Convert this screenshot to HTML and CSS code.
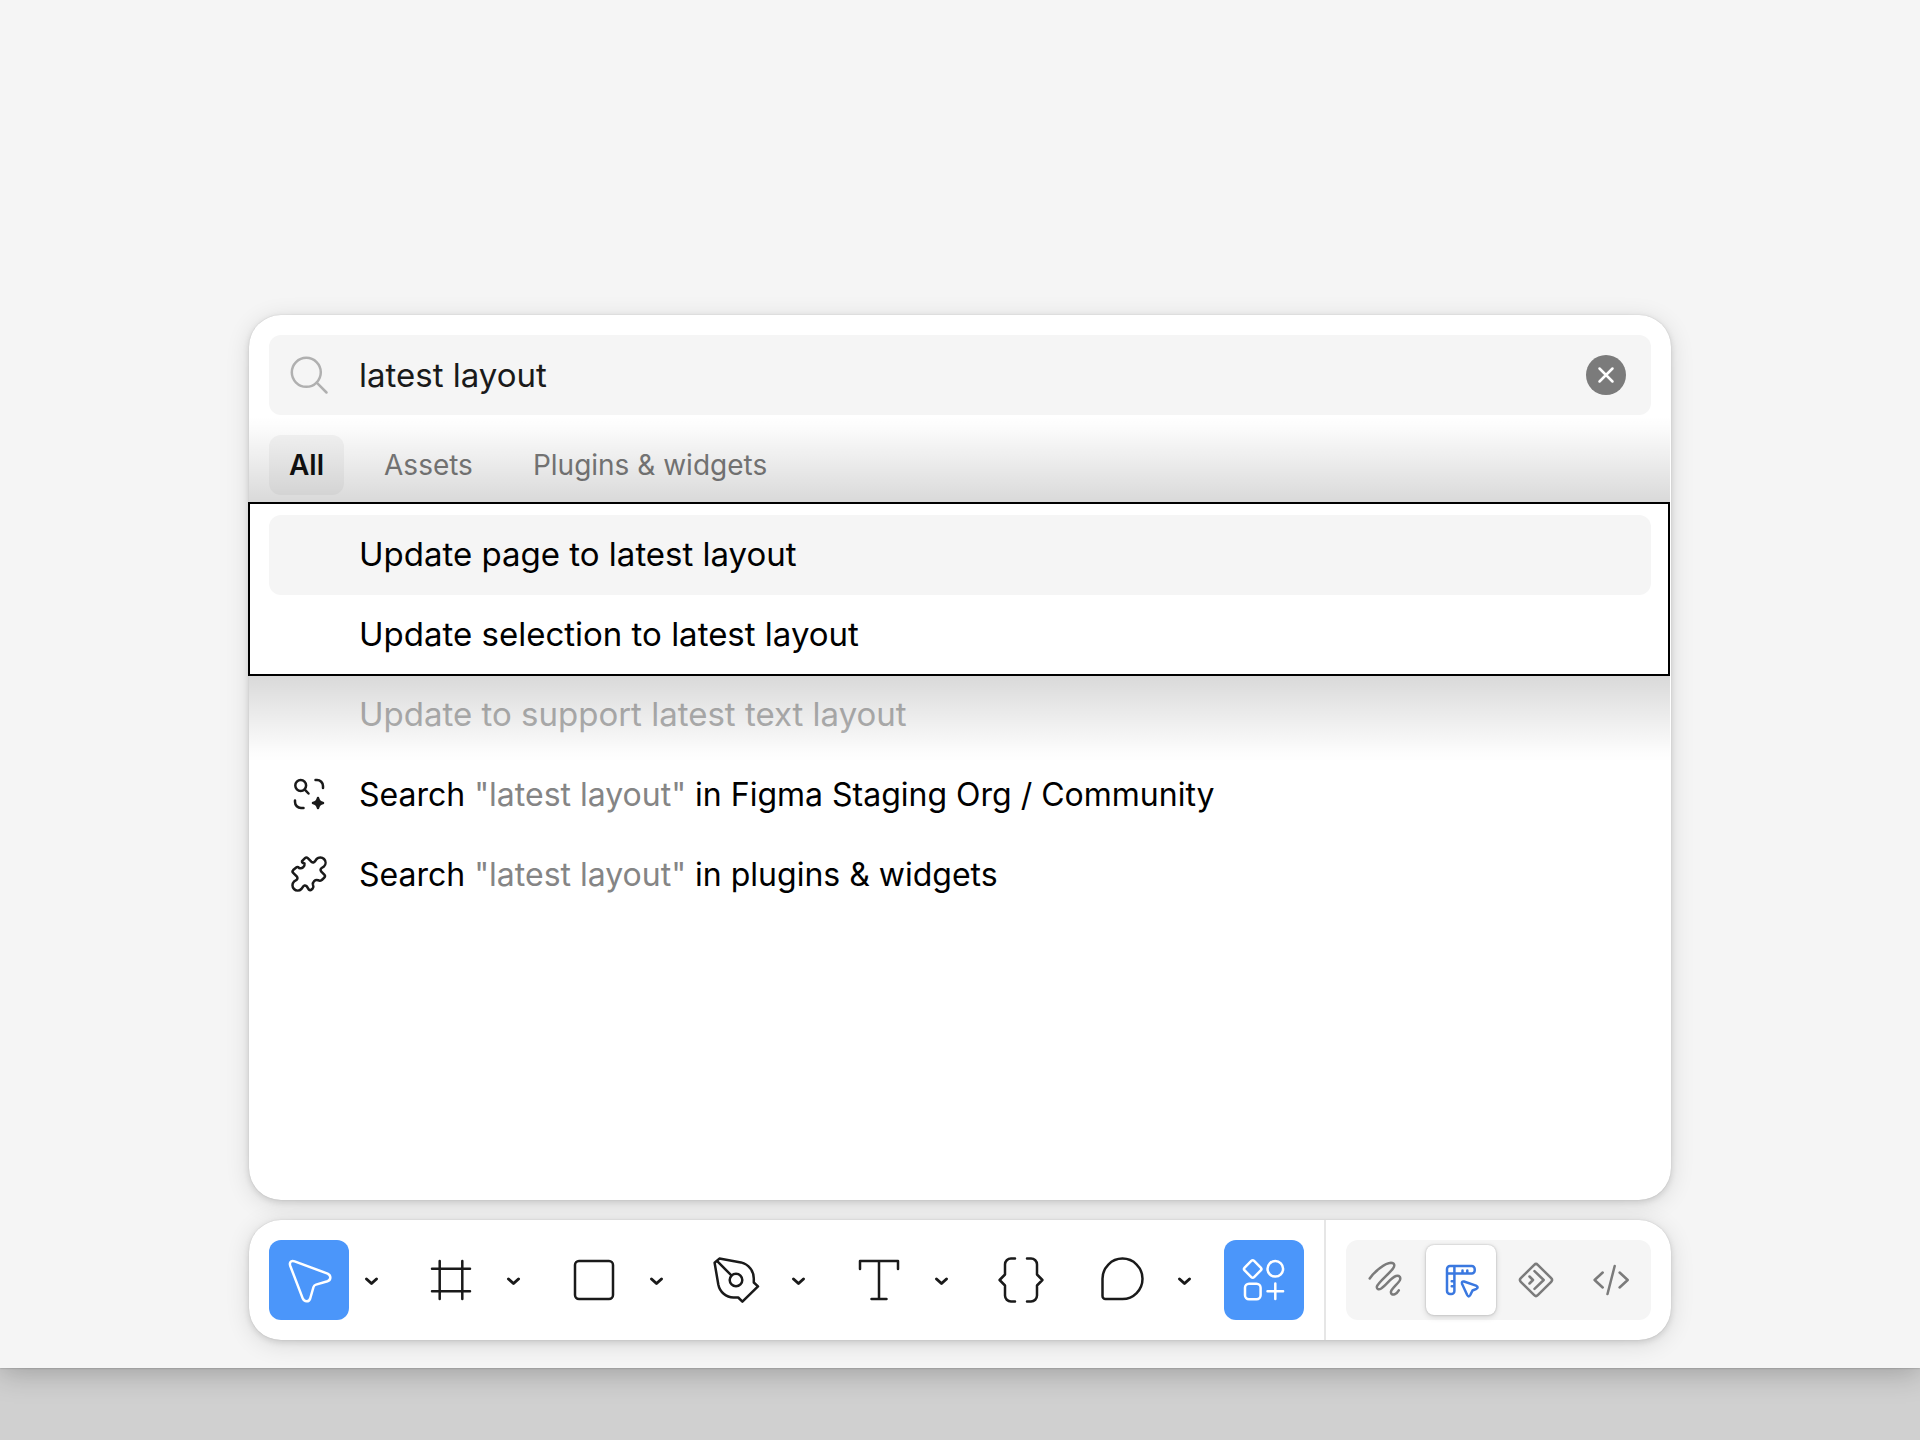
FILE: index.html
```html
<!DOCTYPE html>
<html lang="en">
<head>
  <meta charset="UTF-8">
  <meta name="viewport" content="width=device-width, initial-scale=1.0">
  <title>Quick actions</title>
  <link rel="stylesheet" href="styles.css">
</head>
<body>
  <main class="canvas">

    <!-- Quick actions panel -->
    <section class="panel">
      <div class="search">
        <label for="query" class="search-icon" aria-label="Search">
          <svg viewBox="0 0 40 40"><circle cx="17.300" cy="17.300" r="14.500"/><path d="M27.700 27.700L37.500 37.500"/></svg>
        </label>
        <input type="text" id="query" value="latest layout">
        <button class="clear" aria-label="Clear">
          <svg viewBox="0 0 40 40"><path d="M13.500 13.500l13 13M26.500 13.500l-13 13"/></svg>
        </button>
      </div>

      <nav class="tabs">
        <button class="tab active">All</button>
        <button class="tab">Assets</button>
        <button class="tab">Plugins &amp; widgets</button>
      </nav>

      <div class="results">
        <div class="spotlight">
          <button class="result selected">Update page to latest layout</button>
          <button class="result">Update selection to latest layout</button>
          <div class="spotlight-frame"></div>
        </div>
        <button class="result" disabled>Update to support latest text layout</button>
        <button class="result search-in">
          <svg class="result-icon" viewBox="0 0 40 40">
            <circle cx="11.700" cy="11.500" r="5.400"/>
            <path d="M15.800 15.600l3.700 3.900"/>
            <path d="M26.500 6h1.500a6 6 0 0 1 6 6v2"/>
            <path d="M6 26.500v1.500a6 6 0 0 0 6 6h2.500"/>
            <path class="solid" d="M29 24q.8 4.200 5 5q-4.200.8-5 5q-.8-4.200-5-5q4.200-.8 5-5z"/>
          </svg>
          <span>Search <span class="term">"latest layout"</span> in Figma Staging Org / Community</span>
        </button>
        <button class="result search-in">
          <svg class="result-icon" viewBox="0 0 40 40">
            <path d="M13 7.200L16 4.200a2 2 0 0 1 2.800 0L22.300 7.700Q24.600 9.500 26.200 7L27.600 5A5.200 5.200 0 0 1 35 12.400L33 13.800Q30.500 15.400 32.300 17.700L35.300 20.700a2 2 0 0 1 0 2.800L32.800 26Q31 27.300 29 26.200A4 4 0 0 0 24 31Q25 33 23.700 34.500L22.600 35.500a2 2 0 0 1-2.800 0L17.700 32.300Q15.400 30.500 13.800 33L12.400 35A5.200 5.200 0 0 1 5 27.600L7 26.200Q9.500 24.600 7.700 22.300L4.200 18.800a2 2 0 0 1 0-2.800L7.200 13.500Q8.600 12.400 10.200 14A4 4 0 0 0 15.500 9.500Q12.500 8.700 13 7.200z"/>
          </svg>
          <span>Search <span class="term">"latest layout"</span> in plugins &amp; widgets</span>
        </button>
      </div>
    </section>

    <!-- Bottom toolbar -->
    <div class="toolbar">
      <div class="tools">
        <div class="tool-group">
          <button class="tool active" aria-label="Move">
            <svg viewBox="0 0 80 80"><path d="M25.600 21.400L58.600 33.600Q61.600 35 61.300 38Q61 40.400 58.500 41.200L47 44.600Q45 45.200 44.500 47L41.200 58.500Q40.300 61.300 37.700 61.300Q35 61.400 33.800 58.600L21.300 26Q20.200 22.800 22 21.500Q23.500 20.600 25.600 21.400z"/></svg>
          </button>
          <button class="more" aria-label="More move tools"><svg viewBox="0 0 40 40"><path d="M16.500 19L21.500 23.500L26.500 19"/></svg></button>
        </div>
        <div class="tool-group">
          <button class="tool" aria-label="Frame">
            <svg viewBox="0 0 80 80"><path d="M28.700 21v38M51.300 21v38M21 28.700h38M21 51.300h38"/></svg>
          </button>
          <button class="more" aria-label="More frame tools"><svg viewBox="0 0 40 40"><path d="M16.500 19L21.500 23.500L26.500 19"/></svg></button>
        </div>
        <div class="tool-group">
          <button class="tool" aria-label="Rectangle">
            <svg viewBox="0 0 80 80"><rect x="21" y="21" width="38" height="38" rx="4"/></svg>
          </button>
          <button class="more" aria-label="More shapes"><svg viewBox="0 0 40 40"><path d="M16.500 19L21.500 23.500L26.500 19"/></svg></button>
        </div>
        <div class="tool-group">
          <button class="tool" aria-label="Pen">
            <svg viewBox="0 0 80 80">
              <path d="M18.600 22.800L23.400 18.600L45 22.400C53 24.500 57.800 31 57.800 38.500V42.500L62 46.400L46.400 61.700L42.200 57.500H37.500C30 57.500 23.800 52 22.300 44.500Z"/>
              <path d="M21.200 21.200L35.400 35.400"/>
              <circle cx="40" cy="40" r="6.300"/>
            </svg>
          </button>
          <button class="more" aria-label="More drawing tools"><svg viewBox="0 0 40 40"><path d="M16.500 19L21.500 23.500L26.500 19"/></svg></button>
        </div>
        <div class="tool-group">
          <button class="tool" aria-label="Text">
            <svg viewBox="0 0 80 80"><path d="M21 29v-8h38v8M40 21v38M32.500 59h15"/></svg>
          </button>
          <button class="more" aria-label="More text tools"><svg viewBox="0 0 40 40"><path d="M16.500 19L21.500 23.500L26.500 19"/></svg></button>
        </div>
        <button class="tool" aria-label="Variables">
          <svg viewBox="0 0 80 80"><path d="M34 18.500h-4a6 6 0 0 0-6 6V34.500L18.600 40L24 45.500V55.500a6 6 0 0 0 6 6h4M46 18.500h4a6 6 0 0 1 6 6V34.500L61.400 40L56 45.500V55.500a6 6 0 0 1-6 6h-4"/></svg>
        </button>
        <div class="tool-group">
          <button class="tool" aria-label="Comment">
            <svg viewBox="0 0 80 80"><path d="M40.500 59A20 20.200 0 1 0 20.500 38.800V56a3 3 0 0 0 3 3z"/></svg>
          </button>
          <button class="more" aria-label="More comment tools"><svg viewBox="0 0 40 40"><path d="M16.500 19L21.500 23.500L26.500 19"/></svg></button>
        </div>
        <button class="tool active" aria-label="Actions">
          <svg viewBox="0 0 80 80">
            <rect x="22" y="22.300" width="13.400" height="13.400" rx="2" transform="rotate(45 28.700 29)"/>
            <circle cx="51.300" cy="28.800" r="7.800"/>
            <rect x="21" y="43.700" width="15.600" height="15.600" rx="4"/>
            <path d="M51.300 43.500v15.600M43.500 51.300h15.600"/>
          </svg>
        </button>
      </div>

      <div class="modes">
        <div class="mode-switch">
          <button class="mode" aria-label="Draw">
            <svg viewBox="0 0 70 70"><path d="M18.700 33.500C23 27 34 18 40 17.800C43.500 17.800 44.200 20.500 42 23.500C38.500 28.500 27 37.500 25.900 41.500C25.400 44.300 27.800 45 30.200 43.500C35.500 40 40 32.500 45 31C48.500 30.200 50.200 32.500 48.700 35.500C46.500 39.500 41 43 40 46.500C39.500 49.200 41.500 50 43.600 49.300C45.600 48.500 46.800 47 47.800 45.300"/></svg>
          </button>
          <button class="mode active" aria-label="Design">
            <svg viewBox="0 0 70 70">
              <path d="M24 21H45.700a3 3 0 0 1 3 3V25.500a3 3 0 0 1-3 3H21M21 24a3 3 0 0 1 3-3M21 24V46a3 3 0 0 0 3 3H25.400a3 3 0 0 0 3-3V21M36.500 28V25.500M41.300 28V25.500M28 36.200H25.700M28 41.200H25.700"/>
              <path d="M38 36.500L50 40.600Q53 42.200 50.500 43.800L46.500 45.500L44.300 50Q42.700 52.800 41.200 50L36 38.700Q35.400 36 38 36.500z"/>
            </svg>
          </button>
          <button class="mode" aria-label="Prototype">
            <svg viewBox="0 0 70 70">
              <rect x="23" y="23" width="24" height="24" rx="2.500" transform="rotate(45 35 35)"/>
              <path d="M33.500 26.200L42.700 35L33.500 43.800M28.500 31.500L32 35L28.500 38.500"/>
            </svg>
          </button>
          <button class="mode" aria-label="Dev mode">
            <svg viewBox="0 0 70 70"><path d="M26.700 27.500L18.600 35L26.700 42.500M43.600 27.500L51.700 35L43.600 42.500M38.700 21L31.500 49"/></svg>
          </button>
        </div>
      </div>
    </div>

  </main>
</body>
</html>
```
FILE: styles.css
```css
* {
  margin: 0;
  padding: 0;
  box-sizing: border-box;
}

body {
  font-family: Inter, sans-serif;
  background: #d0d0d0;
  color: #000;
  min-height: 100vh;
}

button,
input {
  font: inherit;
  color: inherit;
  background: none;
  border: none;
  outline: none;
}

svg {
  display: block;
  fill: none;
  stroke: currentColor;
  stroke-width: 2.5;
  stroke-linecap: round;
  stroke-linejoin: round;
}

.canvas {
  min-height: calc(100vh - 72px);
  padding: 28px 20px;
  display: flex;
  flex-direction: column;
  justify-content: flex-end;
  align-items: center;
  gap: 20px;
  background: #f5f5f5;
  box-shadow: 0 0 2px rgba(0, 0, 0, 0.3), 0 4px 28px rgba(0, 0, 0, 0.25);
}

.panel,
.toolbar {
  width: 100%;
  max-width: 1422px;
  background: #fff;
  border-radius: 32px;
  box-shadow: 0 0 1px rgba(0, 0, 0, 0.2), 0 2px 6px rgba(0, 0, 0, 0.12), 0 4px 24px rgba(0, 0, 0, 0.12);
}

.panel {
  min-height: 885px;
  padding: 20px;
}

/* Search field */
.search {
  display: flex;
  align-items: center;
  height: 80px;
  padding: 0 25px 0 20px;
  background: #f5f5f5;
  border-radius: 12px;
  font-size: 33px;
}

.search-icon {
  width: 40px;
  color: #b0b0b0;
}

.search input {
  flex: 1;
  min-width: 0;
  padding-left: 30px;
  color: #1a1a1a;
}

.clear {
  width: 40px;
  height: 40px;
  border-radius: 50%;
  background: #7b7b7b;
  color: #fff;
}

/* Tabs */
.tabs {
  display: flex;
  gap: 20px;
  margin: 20px 0;
}

.tab {
  height: 60px;
  padding: 0 20px;
  border-radius: 12px;
  font-size: 28px;
  color: #7b7b7b;
}

.tab.active {
  background: #f5f5f5;
  color: #111;
  font-weight: 600;
}

/* Results */
.result {
  display: flex;
  align-items: center;
  width: 100%;
  height: 80px;
  padding: 0 20px 2px 90px;
  border-radius: 12px;
  font-size: 33px;
  text-align: left;
}

.result.selected {
  background: #f5f5f5;
}

.result:disabled {
  color: #b3b3b3;
}

.result.search-in {
  gap: 30px;
  padding-left: 20px;
  font-size: 32px;
}

.result-icon {
  flex: none;
  width: 40px;
  height: 40px;
  color: #1a1a1a;
}

.solid {
  fill: currentColor;
}

.term {
  color: #858585;
}

/* Framed rows, with a shade that falls on the rows around them */
.spotlight {
  position: relative;
}

.spotlight-frame {
  position: absolute;
  top: -13px;
  right: -19px;
  bottom: -1px;
  left: -21px;
  border: 2px solid #000;
  pointer-events: none;
}

.spotlight-frame::before,
.spotlight-frame::after {
  content: "";
  position: absolute;
  left: -1px;
  right: -2px;
  height: 86px;
}

.spotlight-frame::before {
  bottom: calc(100% + 2px);
  background: linear-gradient(to top, rgba(0, 0, 0, 0.15), rgba(0, 0, 0, 0.07) 50%, rgba(0, 0, 0, 0.01) 88%, transparent);
}

.spotlight-frame::after {
  top: calc(100% + 2px);
  background: linear-gradient(to bottom, rgba(0, 0, 0, 0.15), rgba(0, 0, 0, 0.07) 50%, rgba(0, 0, 0, 0.01) 88%, transparent);
}

/* Toolbar */
.toolbar {
  display: flex;
  color: #1a1a1a;
}

.tools {
  flex: 1;
  display: flex;
  justify-content: space-between;
  padding: 20px;
}

.tool-group {
  display: flex;
}

.tool {
  width: 80px;
  height: 80px;
  border-radius: 12px;
}

.tool.active {
  background: #4b96fa;
  color: #fff;
}

.more {
  width: 42px;
  height: 80px;
}

.more svg {
  width: 40px;
  margin: 0 auto;
  stroke-width: 3;
}

.modes {
  border-left: 2px solid #e6e6e6;
  padding: 20px;
}

.mode-switch {
  display: flex;
  gap: 5px;
  padding: 5px;
  background: #f5f5f5;
  border-radius: 12px;
}

.mode {
  width: 70px;
  height: 70px;
  border-radius: 8px;
  color: #7b7b7b;
}

.mode.active {
  background: #fff;
  color: #3a78e0;
  box-shadow: 0 0 2px rgba(0, 0, 0, 0.25), 0 2px 6px rgba(0, 0, 0, 0.15);
}
```
